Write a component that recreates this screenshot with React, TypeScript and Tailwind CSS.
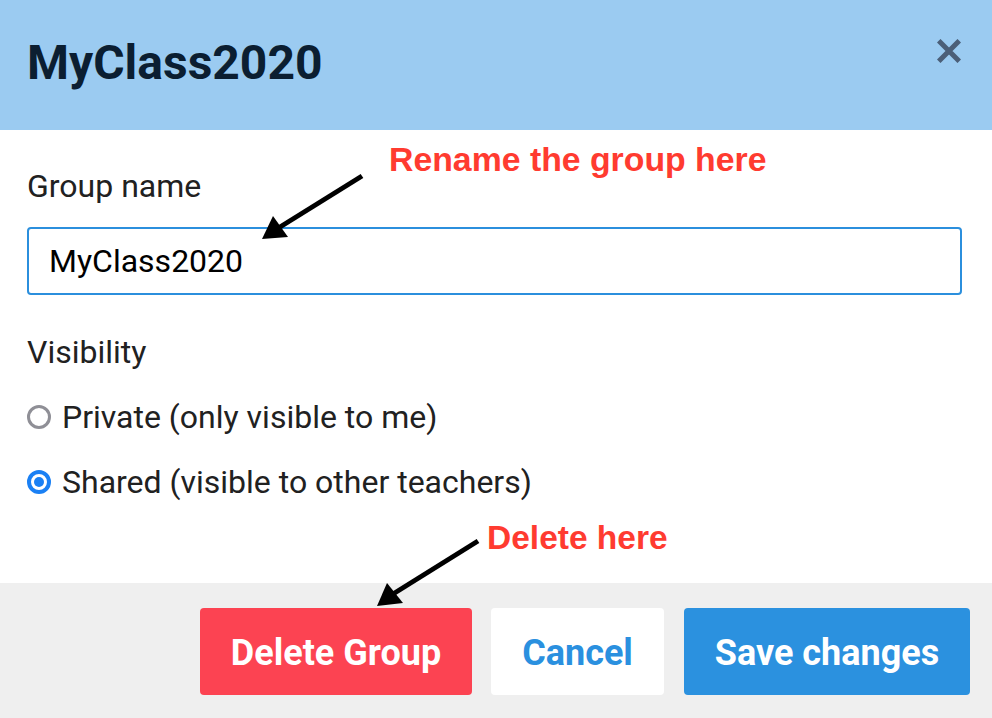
import React from "react";

function Radio({ checked }: { checked: boolean }) {
  if (checked) {
    return (
      <span className="flex h-[24px] w-[24px] shrink-0 items-center justify-center rounded-full border-[4px] border-[#1a80f4] bg-white">
        <span className="h-[10px] w-[10px] rounded-full bg-[#1a80f4]" />
      </span>
    );
  }
  return <span className="h-[24px] w-[24px] shrink-0 rounded-full border-[3px] border-[#8f8f96] bg-white" />;
}

export default function App() {
  return (
    <div className="relative h-[718px] w-[992px] overflow-hidden bg-white font-['Roboto',sans-serif]">
      {/* Header */}
      <div className="flex h-[130px] items-start justify-between bg-[#9bcbf1] pl-[27px] pr-[31px] pt-[35px]">
        <h1 className="text-[48px] font-bold leading-[56px] text-[#0b1e31]">MyClass2020</h1>
        <button className="mt-[4px] flex h-[24px] w-[24px] items-center justify-center">
          <svg width="24" height="24" viewBox="0 0 24 24">
            <path d="M3.5 3.5 L20.5 20.5 M20.5 3.5 L3.5 20.5" stroke="#4b5f78" strokeWidth="5" strokeLinecap="square" />
          </svg>
        </button>
      </div>

      {/* Body */}
      <div className="flex h-[453px] flex-col px-[27px] pt-[37px] text-[#212121]">
        <label className="text-[32px] leading-[38px]">Group name</label>
        <div className="mt-[22px] flex h-[68px] w-[935px] items-center rounded-[4px] border-2 border-[#2b8fdd] px-[20px] text-[32px] leading-[38px] text-black">
          MyClass2020
        </div>
        <div className="mt-[38px] text-[32px] leading-[38px]">Visibility</div>
        <div className="mt-[27px] flex items-center gap-[11px] text-[32px] leading-[38px]">
          <Radio checked={false} />
          <span>Private (only visible to me)</span>
        </div>
        <div className="mt-[27px] flex items-center gap-[11px] text-[32px] leading-[38px]">
          <Radio checked={true} />
          <span>Shared (visible to other teachers)</span>
        </div>
      </div>

      {/* Footer */}
      <div className="flex h-[135px] items-start justify-end gap-[19px] bg-[#efefef] pr-[22px] pt-[25px]">
        <button className="flex h-[87px] w-[272px] items-center justify-center rounded-[4px] bg-[#fc4352] pt-[3px] text-[36px] font-bold text-white">
          Delete Group
        </button>
        <button className="flex h-[87px] w-[173px] items-center justify-center rounded-[4px] bg-white pt-[3px] text-[36px] font-bold text-[#2a90df]">
          Cancel
        </button>
        <button className="ml-[1px] flex h-[87px] w-[286px] items-center justify-center rounded-[4px] bg-[#2b91df] pt-[3px] text-[36px] font-bold text-white">
          Save changes
        </button>
      </div>

      {/* Annotations */}
      <div className="absolute left-[389px] top-[143px] font-['Liberation_Sans',Arial,sans-serif] text-[33.8px] font-bold leading-[33px] text-[#ff3b30]">
        Rename the group here
      </div>
      <div className="absolute left-[487px] top-[521px] font-['Liberation_Sans',Arial,sans-serif] text-[33.5px] font-bold leading-[33px] text-[#ff3b30]">
        Delete here
      </div>
      <svg className="pointer-events-none absolute left-0 top-0" width="992" height="718">
        <line x1="362" y1="176" x2="280" y2="227" stroke="#000" strokeWidth="5" />
        <polygon points="262,239 273,216 288,237" fill="#000" />
        <line x1="478" y1="541" x2="393" y2="594" stroke="#000" strokeWidth="5" />
        <polygon points="377,606 387,583 403,603" fill="#000" />
      </svg>
    </div>
  );
}
